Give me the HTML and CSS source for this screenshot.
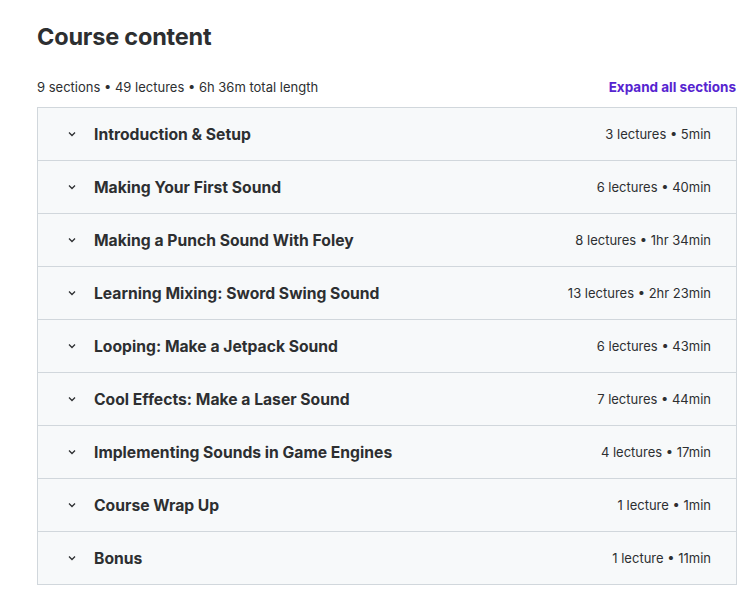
FILE: index.html
```html
<!DOCTYPE html>
<html>
<head>
<meta charset="utf-8">
<link rel="stylesheet" href="styles.css">
</head>
<body>
<div class="page">
  <h2 class="title">Course content</h2>
  <div class="meta">
    <span class="stats">9 sections • 49 lectures • 6h 36m total length</span>
    <span class="expand">Expand all sections</span>
  </div>
  <div class="sections">
    <div class="row"><span class="chev"><svg width="10" height="10" viewBox="0 0 10 10"><path d="M2 3.5 L5 6.5 L8 3.5" fill="none" stroke="#2d2f31" stroke-width="1.3"/></svg></span><span class="name">Introduction &amp; Setup</span><span class="info">3 lectures • 5min</span></div>
    <div class="row"><span class="chev"><svg width="10" height="10" viewBox="0 0 10 10"><path d="M2 3.5 L5 6.5 L8 3.5" fill="none" stroke="#2d2f31" stroke-width="1.3"/></svg></span><span class="name">Making Your First Sound</span><span class="info">6 lectures • 40min</span></div>
    <div class="row"><span class="chev"><svg width="10" height="10" viewBox="0 0 10 10"><path d="M2 3.5 L5 6.5 L8 3.5" fill="none" stroke="#2d2f31" stroke-width="1.3"/></svg></span><span class="name">Making a Punch Sound With Foley</span><span class="info">8 lectures • 1hr 34min</span></div>
    <div class="row"><span class="chev"><svg width="10" height="10" viewBox="0 0 10 10"><path d="M2 3.5 L5 6.5 L8 3.5" fill="none" stroke="#2d2f31" stroke-width="1.3"/></svg></span><span class="name">Learning Mixing: Sword Swing Sound</span><span class="info">13 lectures • 2hr 23min</span></div>
    <div class="row"><span class="chev"><svg width="10" height="10" viewBox="0 0 10 10"><path d="M2 3.5 L5 6.5 L8 3.5" fill="none" stroke="#2d2f31" stroke-width="1.3"/></svg></span><span class="name">Looping: Make a Jetpack Sound</span><span class="info">6 lectures • 43min</span></div>
    <div class="row"><span class="chev"><svg width="10" height="10" viewBox="0 0 10 10"><path d="M2 3.5 L5 6.5 L8 3.5" fill="none" stroke="#2d2f31" stroke-width="1.3"/></svg></span><span class="name">Cool Effects: Make a Laser Sound</span><span class="info">7 lectures • 44min</span></div>
    <div class="row"><span class="chev"><svg width="10" height="10" viewBox="0 0 10 10"><path d="M2 3.5 L5 6.5 L8 3.5" fill="none" stroke="#2d2f31" stroke-width="1.3"/></svg></span><span class="name">Implementing Sounds in Game Engines</span><span class="info">4 lectures • 17min</span></div>
    <div class="row"><span class="chev"><svg width="10" height="10" viewBox="0 0 10 10"><path d="M2 3.5 L5 6.5 L8 3.5" fill="none" stroke="#2d2f31" stroke-width="1.3"/></svg></span><span class="name">Course Wrap Up</span><span class="info">1 lecture • 1min</span></div>
    <div class="row"><span class="chev"><svg width="10" height="10" viewBox="0 0 10 10"><path d="M2 3.5 L5 6.5 L8 3.5" fill="none" stroke="#2d2f31" stroke-width="1.3"/></svg></span><span class="name">Bonus</span><span class="info">1 lecture • 11min</span></div>
  </div>
</div>
</body>
</html>
```
FILE: styles.css
```css
* { box-sizing: border-box; }
body {
  margin: 0;
  background: #fff;
  font-family: Inter, "Liberation Sans", sans-serif;
  color: #2d2f31;
}
.page {
  width: 700px;
  margin-left: 37px;
  padding-top: 22px;
}
.title {
  margin: 0;
  font-size: 23.5px;
  font-weight: 700;
  line-height: 30px;
  letter-spacing: -0.2px;
}
.meta {
  display: flex;
  justify-content: space-between;
  align-items: center;
  margin-top: 25px;
  height: 20px;
  font-size: 13px;
}
.stats { color: #2d2f31; }
.expand {
  color: #5624d0;
  font-weight: 700;
  font-size: 13.5px;
  margin-right: 1px;
}
.sections {
  margin-top: 10px;
  border: 1px solid #d1d7dc;
}
.row {
  display: flex;
  align-items: center;
  height: 53px;
  background: #f7f9fa;
  border-bottom: 1px solid #d1d7dc;
  padding: 0 25px 0 29px;
}
.row:last-child { border-bottom: none; height: 52px; }
.chev {
  width: 10px;
  height: 10px;
  display: flex;
  margin-right: 17px;
}
.name {
  flex: 1;
  font-size: 15.7px;
  font-weight: 700;
  color: #2d2f31;
}
.info {
  font-size: 13px;
  color: #2d2f31;
}
```
